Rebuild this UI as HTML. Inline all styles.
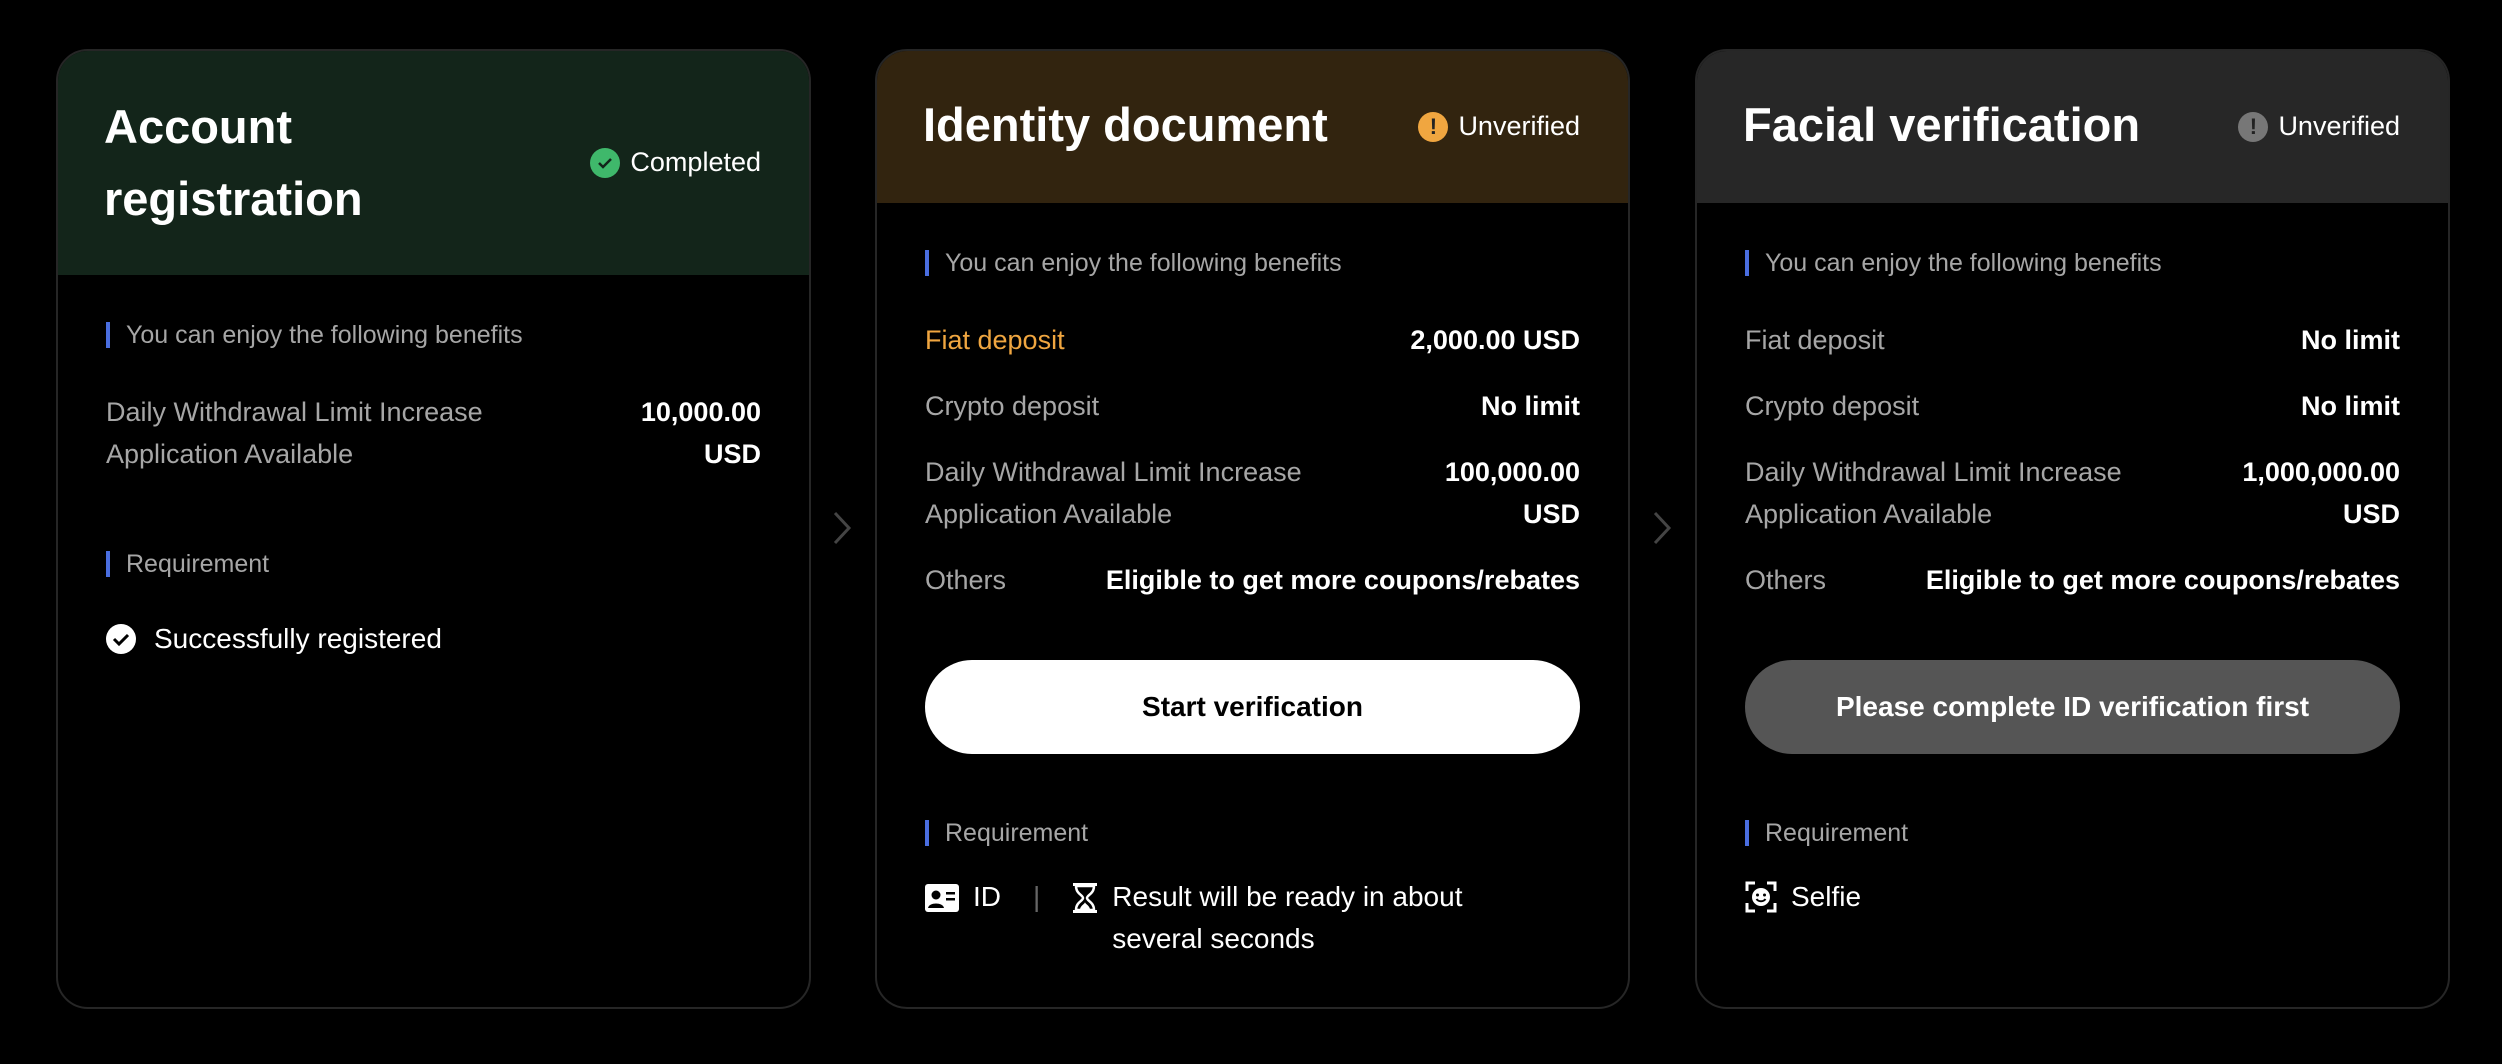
<!DOCTYPE html>
<html><head><meta charset="utf-8"><style>
*{margin:0;padding:0;box-sizing:border-box}
body{width:2502px;height:1064px;background:#000;font-family:"Liberation Sans",sans-serif;color:#fff;position:relative;overflow:hidden}
.card{position:absolute;top:49px;width:755px;height:960px;border:2px solid #262626;border-radius:32px;overflow:hidden;background:#000}
.hd{position:absolute;left:0;top:0;right:0}
.title{position:absolute;left:46px;font-size:47px;font-weight:bold;line-height:72px}
.st{position:absolute;right:48px;font-size:27px;display:flex;align-items:center;gap:10px}
.ic{width:30px;height:30px;border-radius:50%;display:flex;align-items:center;justify-content:center;font-weight:bold;font-size:22px;color:#222}
.lbl{position:absolute;left:48px;font-size:25px;color:#a6a6a6;border-left:4px solid #4a6ee0;padding-left:16px;line-height:26px}
.row{position:absolute;left:48px;right:48px;display:flex;justify-content:space-between;font-size:27px;line-height:42px}
.row .k{color:#a6a6a6}
.row .v{font-weight:bold;text-align:right}
.btn{position:absolute;left:48px;right:48px;top:609px;height:94px;border-radius:47px;display:flex;align-items:center;justify-content:center;font-size:28px;font-weight:bold}
.chev{position:absolute;top:510px;width:20px;height:36px}
</style></head><body>

<div class="card" style="left:56px">
 <div class="hd" style="height:224px;background:#13251a"></div>
 <div class="title" style="top:40px">Account<br>registration</div>
 <div class="st" style="top:96px"><div class="ic" style="background:#3fb86b"><svg width="18" height="18" viewBox="0 0 18 18"><path d="M3 9l4 4 8-8" stroke="#13251a" stroke-width="2.5" fill="none"/></svg></div>Completed</div>
 <div class="lbl" style="top:271px">You can enjoy the following benefits</div>
 <div class="row" style="top:340px"><div class="k">Daily Withdrawal Limit Increase<br>Application Available</div><div class="v">10,000.00<br>USD</div></div>
 <div class="lbl" style="top:500px">Requirement</div>
 <div style="position:absolute;left:48px;top:567px;font-size:28px;display:flex;align-items:center;gap:18px;line-height:42px"><svg width="30" height="30" viewBox="0 0 30 30"><circle cx="15" cy="15" r="15" fill="#fff"/><path d="M8 15l5 5 9-9" stroke="#000" stroke-width="3" fill="none"/></svg>Successfully registered</div>
</div>

<svg class="chev" style="left:832px" viewBox="0 0 20 36"><path d="M3 3l14 15-14 15" stroke="#444" stroke-width="3" fill="none"/></svg>

<div class="card" style="left:875px">
 <div class="hd" style="height:152px;background:#32240f"></div>
 <div class="title" style="top:38px">Identity document</div>
 <div class="st" style="top:60px"><div class="ic" style="background:#f0a640">!</div>Unverified</div>
 <div class="lbl" style="top:199px">You can enjoy the following benefits</div>
 <div class="row" style="top:268px"><div class="k" style="color:#f0a640">Fiat deposit</div><div class="v">2,000.00 USD</div></div>
 <div class="row" style="top:334px"><div class="k">Crypto deposit</div><div class="v">No limit</div></div>
 <div class="row" style="top:400px"><div class="k">Daily Withdrawal Limit Increase<br>Application Available</div><div class="v">100,000.00<br>USD</div></div>
 <div class="row" style="top:508px"><div class="k">Others</div><div class="v">Eligible to get more coupons/rebates</div></div>
 <div class="btn" style="background:#fff;color:#000">Start verification</div>
 <div class="lbl" style="top:769px">Requirement</div>
 <div style="position:absolute;left:48px;top:825px;font-size:28px;line-height:42px;display:flex;gap:14px">
  <svg width="34" height="28" viewBox="0 0 34 28" style="margin-top:8px"><rect width="34" height="28" rx="3" fill="#fff"/><circle cx="11" cy="11" r="4.5" fill="#000"/><path d="M3 24c1-6 15-6 16 0z" fill="#000"/><rect x="21" y="8" width="9" height="2.5" fill="#000"/><rect x="21" y="14" width="9" height="2.5" fill="#000"/></svg>
  <span>ID</span><span style="color:#666;margin:0 18px">|</span>
  <svg width="26" height="32" viewBox="0 0 26 32" style="margin-top:6px"><rect x="1" y="1" width="24" height="3" fill="#fff"/><rect x="1" y="28" width="24" height="3" fill="#fff"/><path d="M4 4h18c0 8-7 9-7 12s7 4 7 12H4c0-8 7-9 7-12S4 12 4 4z" fill="none" stroke="#fff" stroke-width="2.5"/><path d="M8 27c1-4 5-5 5-7 0 2 4 3 5 7z" fill="#fff"/></svg>
  <span>Result will be ready in about<br>several seconds</span>
 </div>
</div>

<svg class="chev" style="left:1652px" viewBox="0 0 20 36"><path d="M3 3l14 15-14 15" stroke="#444" stroke-width="3" fill="none"/></svg>

<div class="card" style="left:1695px">
 <div class="hd" style="height:152px;background:#272727"></div>
 <div class="title" style="top:38px">Facial verification</div>
 <div class="st" style="top:60px"><div class="ic" style="background:#777">!</div>Unverified</div>
 <div class="lbl" style="top:199px">You can enjoy the following benefits</div>
 <div class="row" style="top:268px"><div class="k">Fiat deposit</div><div class="v">No limit</div></div>
 <div class="row" style="top:334px"><div class="k">Crypto deposit</div><div class="v">No limit</div></div>
 <div class="row" style="top:400px"><div class="k">Daily Withdrawal Limit Increase<br>Application Available</div><div class="v">1,000,000.00<br>USD</div></div>
 <div class="row" style="top:508px"><div class="k">Others</div><div class="v">Eligible to get more coupons/rebates</div></div>
 <div class="btn" style="background:#555;color:#fff">Please complete ID verification first</div>
 <div class="lbl" style="top:769px">Requirement</div>
 <div style="position:absolute;left:48px;top:825px;font-size:28px;line-height:42px;display:flex;gap:14px">
  <svg width="32" height="32" viewBox="0 0 32 32" style="margin-top:5px"><path d="M2 10V2h8M22 2h8v8M30 22v8h-8M10 30H2v-8" stroke="#fff" stroke-width="3" fill="none"/><circle cx="16" cy="16" r="9" fill="#fff"/><circle cx="12.5" cy="14" r="1.5" fill="#000"/><circle cx="19.5" cy="14" r="1.5" fill="#000"/><path d="M11.5 18c2 3 7 3 9 0" stroke="#000" stroke-width="2" fill="none"/></svg>
  <span>Selfie</span>
 </div>
</div>
</body></html>
